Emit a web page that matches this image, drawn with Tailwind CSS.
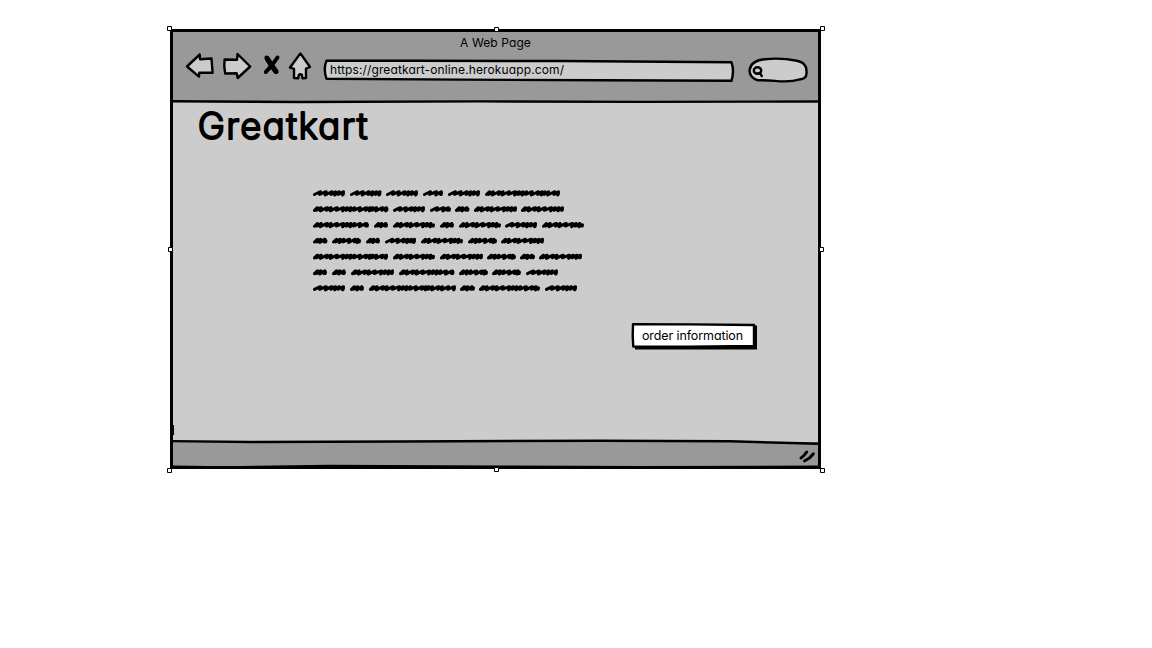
<!DOCTYPE html>
<html lang="en">
<head>
<meta charset="utf-8">
<title>A Web Page</title>
<script src="https://cdn.jsdelivr.net/npm/@tailwindcss/browser@4"></script>
</head>
<body class="h-screen overflow-hidden bg-white pl-[170px] pt-[29px] font-['Inter','Lato',sans-serif] text-black [font-feature-settings:'cv11']">
<main class="relative flex h-[440px] w-[651px] flex-col bg-[#ccc]">
  <header class="h-[72px] shrink-0 bg-[#999]">
    <div class="flex h-[28px] items-center justify-center text-[12px] leading-[28px]"><span class="whitespace-nowrap tracking-[0.1px]">A Web Page</span></div>
    <div class="flex h-[32px]">
      <svg class="ml-[13px] h-8 w-[132px] shrink-0 overflow-visible" viewBox="183 57 132 32" fill="#ccc" stroke="#000" stroke-width="2.4" stroke-linejoin="round" stroke-linecap="round">
        <path d="M187 66.500L199.800 54.500L200 59.300L211.500 58.500L212.600 72.800L199.300 72.600L199 76.600Z"/>
        <path d="M224.600 59.500L237 59.800L237.500 54L250.200 66.500L237.700 78L236.700 73.300L225.200 73.500Q223.600 66 224.600 59.500Z"/>
        <path d="M266.500 57.500Q271 64 276.500 72M277.500 57.500Q272 66 265.800 72" stroke-width="4"/><path d="M267.500 59Q271 65 275.500 71" stroke-width="5.400"/>
        <path d="M290 67.500L300.400 53.400L310 67L306 68.500L306 78L302.500 78.300L301.800 74.600Q300 73.500 298.800 75L298.200 78.300L294 78L294 68.800Z"/>
      </svg>
      <div class="relative ml-[7px] h-8 w-[414px]">
        <svg class="absolute inset-0 h-8 w-[414px]" viewBox="322 57 414 32" fill="#ccc" stroke="#000" stroke-width="2.400" stroke-linejoin="round">
          <path d="M326.500 60.600L420 60.800L560 61L731.500 62.300Q734.500 71 731.500 80.800L600 80.300L460 79.600L326.500 78.800Q323 69 326.500 60.600Z"/>
        </svg>
        <div class="relative flex h-[26px] items-center pl-2 text-[12px]"><span class="whitespace-nowrap tracking-[0.125px]">https://greatkart-online.herokuapp.com/</span></div>
      </div>
      <svg class="ml-[11px] h-8 w-16" viewBox="747 57 64 32" fill="#ccc" stroke="#000" stroke-width="2.400" stroke-linecap="round">
        <path d="M758 80.300Q749.300 78 749.500 70Q751 60.500 765 59.200Q781 57.600 797 60.700Q807 62.500 806.500 72Q807 78.500 801 79.200Q790 82.500 775 80.900Q766 80 758 80.300Z"/>
        <ellipse cx="757.500" cy="70.500" rx="3.700" ry="3.300" stroke-width="2.400"/><path d="M757 73.700L760 73.200L761.800 76" stroke-width="2.400"/>
      </svg>
    </div>
  </header>
  <section class="flex grow flex-col">
    <h1 class="ml-[20px] mt-[2px] h-[46px]">
      <svg class="h-[46px] w-[190px]" viewBox="190 103 190 46" stroke="#000" stroke-width="1.900" stroke-linejoin="round" stroke-linecap="round"><text x="197.700" y="139" font-size="36.500" font-weight="300" textLength="170">Greatkart</text></svg>
    </h1>
    <svg id="copy" class="ml-[140px] mt-9 h-[112px] w-[278px] shrink-0" viewBox="310 185 278 112" fill="none" stroke="#000" stroke-width="3" stroke-linecap="round" stroke-linejoin="round"></svg>
    <div class="relative ml-[461px] mt-[25px] h-[29px] w-[128px]">
      <svg class="absolute inset-0 h-[29px] w-[128px]" viewBox="631 322 128 29">
        <path d="M635 325.500L757 325.500L757 349.500L635 349.500Z"/>
        <path d="M633 324.200L690 324.400L754 325L754 346L690 346.800L633.300 346.600L632.700 336Z" fill="#fff" stroke="#000" stroke-width="2.400" stroke-linejoin="round"/>
      </svg>
      <button class="relative flex h-[29px] w-[123px] items-center justify-center text-[12.500px]"><span class="whitespace-nowrap tracking-[-0.1px]">order information</span></button>
    </div>
  </section>
  <footer class="flex h-[27px] shrink-0 items-center justify-end bg-[#999] pr-[5px]">
    <svg class="h-4 w-[18px]" viewBox="798 448 18 16" fill="none" stroke="#000" stroke-width="3" stroke-linecap="round"><path d="M801 458Q804 456 806.700 452M804.500 461Q810 458.500 813.300 453.800"/></svg>
  </footer>
  <!-- hand-drawn window frame and resize handles -->
  <svg class="pointer-events-none absolute -left-1 -top-1 h-[448px] w-[660px]" viewBox="166 25 660 448" fill="none" stroke="#000">
    <path d="M171.500 29V469M170 30.500H821M819.500 29V469M170 467.400H821" stroke-width="3"/>
    <path d="M172 101.200L300 102L480 101.400L640 101.900L819 101.500" stroke-width="2.400"/>
    <path d="M172 441.100L250 442L400 441.500L600 440.700L730 441.300L819 443.800" stroke-width="2.400"/>
    <path d="M173 466.300L225 467L330 465.500L500 466.300L640 466.800L819 466.300" stroke-width="1.600"/>
    <path d="M173.300 425V435" stroke-width="1.500"/>
    <g fill="#fff" stroke-width="1"><path d="M167.500 26.500h4v4h-4zM494.500 27.500h4v4h-4zM820.500 26.500h4v4h-4zM168.500 247.500h4v4h-4zM819.500 247.500h4v4h-4zM167.500 468.500h4v4h-4zM494.500 467.500h4v4h-4zM820.500 468.500h4v4h-4z"/></g>
  </svg>
</main>
<script>
// Scribbled placeholder words: baseline y followed by [start, end] pairs.
const rows = [
 [193.300,[313,345,350,381.5,386,418,423,443,448,480,485,560]],
 [209.200,[313,388.5,393,425,430,451,455,469.5,474,517,521,564]],
 [225,[313,369,374,388,393,435,440,454,459,501,505,537,542,584]],
 [240.800,[313,327.5,332,361,366,380,385,416,421,463,468,497,501,544]],
 [256.700,[313,388,393,435,440,483,487,516,520,535,539,582]],
 [272.400,[313,327,332,346,351,394,399,454.5,459,488,492,521,526,558]],
 [288.200,[313,345,350,364,369,456,460,475,479,540,545,577]]
];
// Horizontal advance of each pen stroke, by word length.
const steps = {
 15:[3,3.5,4.5],
 21:[6,6.5,5],
 29:[3,4,4,6,6],
 32:[6,6,6,4,4,4.5],
 0:[3,4,6.5,4,6.5,6.5,4,4,4,6,6.5,4]
};
let d = '';
for (const [y, xs] of rows) for (let i = 0; i < xs.length; i += 2) {
  const a = xs[i] + 1.5, b = xs[i + 1] - 1.5, w = xs[i + 1] - xs[i];
  const p = steps[w < 17 ? 15 : w < 23 ? 21 : w < 30 ? 29 : w < 34 ? 32 : 0];
  let x = a, k = 0;
  d += `M${a} ${y + 1.2}`;
  while (x < b - 3) {
    const s = Math.min(p[k % p.length], b - x), low = k % 2 ? 1.7 : 1.1;
    d += `L${x + s * .85} ${y - 1.3}L${x + s} ${y - 1.5}L${x + s - .9} ${y + low}`;
    x += s - 0.3; k++;
  }
  d += `L${b} ${y - 0.3}L${b - .3} ${y + 1.1}`;
}
const path = document.createElementNS('http://www.w3.org/2000/svg', 'path');
path.setAttribute('d', d);
document.getElementById('copy').appendChild(path);
</script>
</body>
</html>
